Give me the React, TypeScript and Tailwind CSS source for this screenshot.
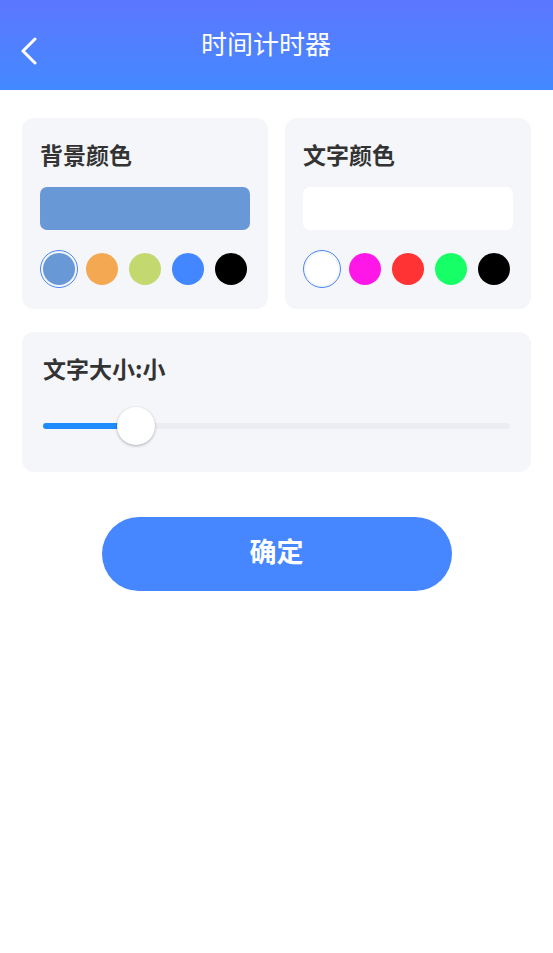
import { useState } from 'react';

const bgColors = ['#6898d5', '#f5a852', '#c3d96f', '#4287ff', '#000000'];
const textColors = ['#ffffff', '#ff17e8', '#ff3333', '#17ff66', '#000000'];

const font = { fontFamily: '"Noto Sans CJK SC", "Noto Sans", sans-serif' };

function Swatches({ colors, selected, onPick }: { colors: string[]; selected: number; onPick: (i: number) => void }) {
  return (
    <div className="mt-[20px] flex justify-between">
      {colors.map((c, i) => (
        <button
          key={c}
          onClick={() => onPick(i)}
          className={
            'w-[38px] h-[38px] rounded-full flex items-center justify-center ' +
            (i === selected ? 'border border-[#4a86f7]' : 'border border-transparent')
          }
        >
          <span className="block w-[32px] h-[32px] rounded-full" style={{ backgroundColor: c }} />
        </button>
      ))}
    </div>
  );
}

function ColorCard({ title, colors, selected, onPick }: { title: string; colors: string[]; selected: number; onPick: (i: number) => void }) {
  return (
    <div className="flex-1 bg-[#f5f6fa] rounded-[12px] pt-[21px] pb-[21px] px-[18px]">
      <div className="text-[23px] leading-[30px] font-bold text-[#333333]">{title}</div>
      <div className="mt-[18px] h-[43px] rounded-[7px]" style={{ backgroundColor: colors[selected] }} />
      <Swatches colors={colors} selected={selected} onPick={onPick} />
    </div>
  );
}

export default function App() {
  const [bg, setBg] = useState(0);
  const [fg, setFg] = useState(0);

  return (
    <div className="w-[553px] h-[953px] bg-white" style={font}>
      <div className="h-[90px] bg-linear-to-b from-[#5b77ff] to-[#4289ff] flex items-center">
        <button className="w-[60px] h-full flex items-center pl-[20px] pt-[12px]">
          <svg width="18" height="28" viewBox="0 0 18 28" fill="none">
            <polyline points="15,2 3,14 15,26" stroke="white" strokeWidth="3" strokeLinecap="round" strokeLinejoin="round" />
          </svg>
        </button>
        <div className="flex-1 text-center text-white text-[26px] leading-none pb-[4px]">时间计时器</div>
        <div className="w-[81px]" />
      </div>

      <div className="px-[22px] pt-[28px]">
        <div className="flex gap-[17px]">
          <ColorCard title="背景颜色" colors={bgColors} selected={bg} onPick={setBg} />
          <ColorCard title="文字颜色" colors={textColors} selected={fg} onPick={setFg} />
        </div>

        <div className="mt-[23px] bg-[#f5f6fa] rounded-[12px] pt-[21px] pb-[27px] px-[21px]">
          <div className="text-[23px] leading-[30px] font-bold text-[#333333]">文字大小:小</div>
          <div className="mt-[24px] relative h-[38px] flex items-center">
            <div className="w-full h-[6px] rounded-full bg-[#ebedf2]">
              <div className="w-[93px] h-full rounded-full bg-[#1e8cff]" />
            </div>
            <div className="absolute left-[74px] top-0 w-[38px] h-[38px] rounded-full bg-white shadow-[0_1px_3px_rgba(0,0,0,0.3)]" />
          </div>
        </div>

        <div className="mt-[45px] flex justify-center">
          <button className="w-[350px] h-[74px] rounded-full bg-[#4687ff] text-white text-[27px] font-bold pb-[5px]">确定</button>
        </div>
      </div>
    </div>
  );
}
